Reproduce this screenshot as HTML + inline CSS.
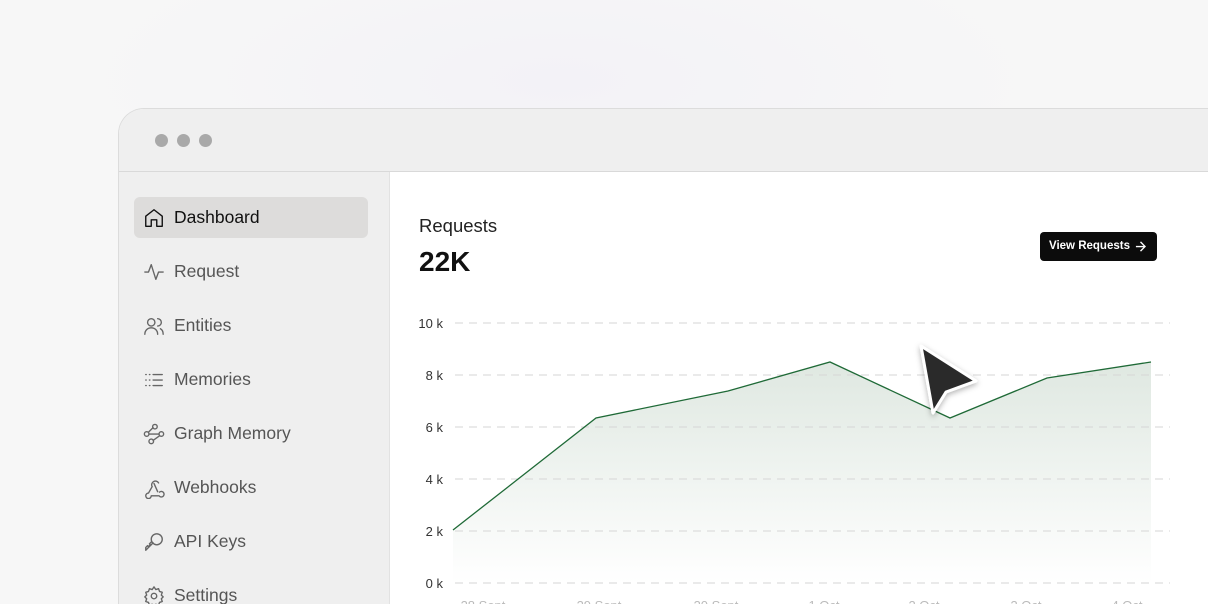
<!DOCTYPE html>
<html><head><meta charset="utf-8">
<style>
*{margin:0;padding:0;box-sizing:border-box}
html,body{width:1208px;height:604px;overflow:hidden}
body{font-family:"Liberation Sans",sans-serif;background:radial-gradient(ellipse 600px 200px at 560px 80px,#f3f2f7 0%,#f7f7f7 80%),#f7f7f7;position:relative}
.win{position:absolute;left:118px;top:108px;width:1120px;height:496px;border:1px solid #dcdcdc;border-bottom:none;border-radius:26px 26px 0 0;background:#fff;overflow:hidden}
.bar{height:63px;background:#efefef;border-bottom:1px solid #d9d9d9;position:relative}
.dot{position:absolute;top:25px;width:13px;height:13px;border-radius:50%;background:#a9a9a9}
.side{position:absolute;left:0;top:63px;width:271px;height:440px;background:#efefef;border-right:1px solid #e2e2e2}
.item{position:absolute;left:15px;width:234px;height:41px;display:flex;align-items:center;font-size:17.5px;color:#555}
.item svg{position:absolute;left:9px;width:22px;height:22px;fill:none;stroke:#666;stroke-width:1.5;stroke-linecap:round;stroke-linejoin:round}
.item span{position:absolute;left:40px}
.item.act{background:#dddcdb;border-radius:6px;color:#111}
.item.act svg{stroke:#111}
.t{position:absolute;font-family:"Liberation Sans",sans-serif}
</style></head><body>
<div class="win">
 <div class="bar"><div class="dot" style="left:36px"></div><div class="dot" style="left:58px"></div><div class="dot" style="left:80px"></div></div>
 <div class="side">
  <div class="item act" style="top:25px"><svg viewBox="0 0 24 24"><path d="M3 10l9-7 9 7v11H15v-7H9v7H3z"/></svg><span>Dashboard</span></div>
  <div class="item" style="top:79px"><svg viewBox="0 0 24 24"><path d="M2 12h4l3-8 5 16 3-8h5"/></svg><span>Request</span></div>
  <div class="item" style="top:133px"><svg viewBox="0 0 24 24"><circle cx="9" cy="8" r="4"/><path d="M2 21c0-4 3-7 7-7s7 3 7 7M16 4a4 4 0 010 8M19 15c2 1 3 3 3 6"/></svg><span>Entities</span></div>
  <div class="item" style="top:187px"><svg viewBox="0 0 24 24"><path d="M3 6h.5M3 12h.5M3 18h.5M7 6h.5M7 12h.5M7 18h.5M11 6h10M11 12h10M11 18h10"/></svg><span>Memories</span></div>
  <div class="item" style="top:241px"><svg viewBox="0 0 24 24"><circle cx="13" cy="4" r="2.5"/><circle cx="4" cy="12" r="2.5"/><circle cx="20" cy="12" r="2.5"/><circle cx="9" cy="20" r="2.5"/><path d="M11 5l-5 5M6.5 12h11M18 14l-7 5"/></svg><span>Graph Memory</span></div>
  <div class="item" style="top:295px"><svg viewBox="0 0 24 24"><path d="M18 16.5a3 3 0 11-.5 4H9a3 3 0 11-3-3M6 17.5l4-7a4 4 0 117 -4M12 7l4 9"/></svg><span>Webhooks</span></div>
  <div class="item" style="top:349px"><svg viewBox="0 0 24 24"><circle cx="15" cy="9" r="6"/><path d="M11 13l-8 8v-3l2-2 1 1 2-2-1-1 2-2"/></svg><span>API Keys</span></div>
  <div class="item" style="top:403px"><svg viewBox="0 0 24 24"><circle cx="12" cy="12" r="3"/><path d="M12 2l2 3 3-1 1 3 3 1-1 3 2 2-2 2 1 3-3 1-1 3-3-1-2 3-2-3-3 1-1-3-3-1 1-3-2-2 2-2-1-3 3-1 1-3 3 1z"/></svg><span>Settings</span></div>
 </div>
</div>
<div class="t" style="left:419px;top:215px;font-size:18.5px;color:#222">Requests</div>
<div class="t" style="left:419px;top:246px;font-size:28px;font-weight:bold;color:#111">22K</div>
<div class="t" style="left:1040px;top:232px;width:117px;height:29px;background:#0c0c0c;border-radius:4px;color:#fff;font-size:11.5px;font-weight:bold;line-height:29px;padding-left:9px">View Requests <svg style="position:absolute;right:11px;top:9px" width="11" height="11" viewBox="0 0 12 12"><path d="M1 6h10M6 1l5 5-5 5" fill="none" stroke="#fff" stroke-width="1.5"/></svg></div>
<svg style="position:absolute;left:0;top:0" width="1208" height="604">
 <defs><linearGradient id="g" x1="0" y1="0" x2="0" y2="1"><stop offset="0" stop-color="#dfe8e1"/><stop offset="1" stop-color="#ffffff"/></linearGradient>
 <filter id="s" x="-50%" y="-50%" width="200%" height="200%"><feDropShadow dx="0" dy="2" stdDeviation="3" flood-opacity="0.3"/></filter></defs>
 <path d="M453 530L596 418L728 391L830 362L950 418L1047 378L1151 362L1151 583L453 583Z" fill="url(#g)"/>
 <g stroke="#d6d6d6" stroke-dasharray="8 6" stroke-width="1">
  <line x1="455" y1="323" x2="1170" y2="323"/><line x1="455" y1="375" x2="1170" y2="375"/><line x1="455" y1="427" x2="1170" y2="427"/><line x1="455" y1="479" x2="1170" y2="479"/><line x1="455" y1="531" x2="1170" y2="531"/><line x1="455" y1="583" x2="1170" y2="583"/>
 </g>
 <polyline points="453,530 596,418 728,391 830,362 950,418 1047,378 1151,362" fill="none" stroke="#1f6a37" stroke-width="1.3"/>
 <g font-family="Liberation Sans" font-size="13" fill="#333" text-anchor="end">
  <text x="443" y="328">10 k</text><text x="443" y="380">8 k</text><text x="443" y="432">6 k</text><text x="443" y="484">4 k</text><text x="443" y="536">2 k</text><text x="443" y="588">0 k</text>
 </g>
 <g font-family="Liberation Sans" font-size="13" fill="#bbb" text-anchor="middle">
  <text x="483" y="610">28 Sept</text><text x="599" y="610">29 Sept</text><text x="716" y="610">30 Sept</text><text x="824" y="610">1 Oct</text><text x="924" y="610">2 Oct</text><text x="1026" y="610">3 Oct</text><text x="1127" y="610">4 Oct</text>
 </g>
 <path d="M921 346L976 381L946 392L933 413Z" fill="#2b2b2b" stroke="#fff" stroke-width="3" stroke-linejoin="round" filter="url(#s)"/>
</svg>
</body></html>
